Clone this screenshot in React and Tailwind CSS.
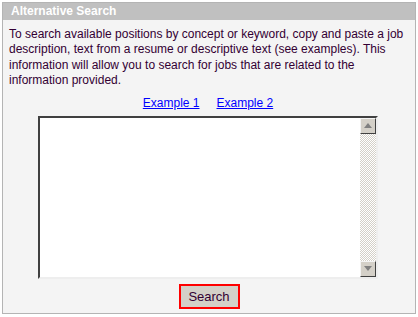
export default function App() {
  return (
    <div className="w-[418px] h-[317px] bg-white pt-[2px] pl-[2px]" style={{ fontFamily: '"Liberation Sans", Arial, sans-serif' }}>
      <div className="w-[414px] h-[312px] border border-[#b4b4b4] bg-[#f4f4f4] flex flex-col">
        <div className="h-[17px] bg-[#c0c0c0] text-white font-bold text-[12px] leading-[17px] pl-[8px]">Alternative Search</div>
        <div className="pl-[6px] pr-[6px] pt-[7px] text-[12px] leading-[15.4px] text-[#330033]">
          To search available positions by concept or keyword, copy and paste a job description, text from a resume or descriptive text (see examples). This information will allow you to search for jobs that are related to the information provided.
        </div>
        <div className="flex justify-center gap-[17px] mt-[7px] text-[12px] leading-[15px] text-[#0000ff] underline pr-[2px]">
          <span>Example 1</span>
          <span>Example 2</span>
        </div>
        <div className="mt-[5px] ml-[35px] w-[340px] h-[163px] border-2 border-t-[#404040] border-l-[#404040] border-b-[#eeeeee] border-r-[#eeeeee] bg-white flex justify-end">
          <div className="w-[16px] h-full flex flex-col bg-[repeating-conic-gradient(#d4d0c8_0%_25%,#ffffff_0%_50%)] bg-[length:2px_2px]">
            <div className="h-[16px] bg-[#d4d0c8] border border-t-[#f4f4f4] border-l-[#f4f4f4] border-b-[#404040] border-r-[#404040] flex items-center justify-center">
              <svg width="8" height="5" viewBox="0 0 8 5"><polygon points="0,5 8,5 4,0" fill="#808080" /></svg>
            </div>
            <div className="flex-1" />
            <div className="h-[16px] bg-[#d4d0c8] border border-t-[#f4f4f4] border-l-[#f4f4f4] border-b-[#404040] border-r-[#404040] flex items-center justify-center">
              <svg width="8" height="5" viewBox="0 0 8 5"><polygon points="0,0 8,0 4,5" fill="#808080" /></svg>
            </div>
          </div>
        </div>
        <div className="flex justify-center mt-[5px]">
          <button className="w-[61px] h-[25px] border-2 border-[#ff0000] bg-[#d4d0c8] text-[13px] text-[#330033] leading-[21px]" style={{ fontFamily: '"Liberation Sans", Arial, sans-serif' }}>Search</button>
        </div>
      </div>
    </div>
  );
}
